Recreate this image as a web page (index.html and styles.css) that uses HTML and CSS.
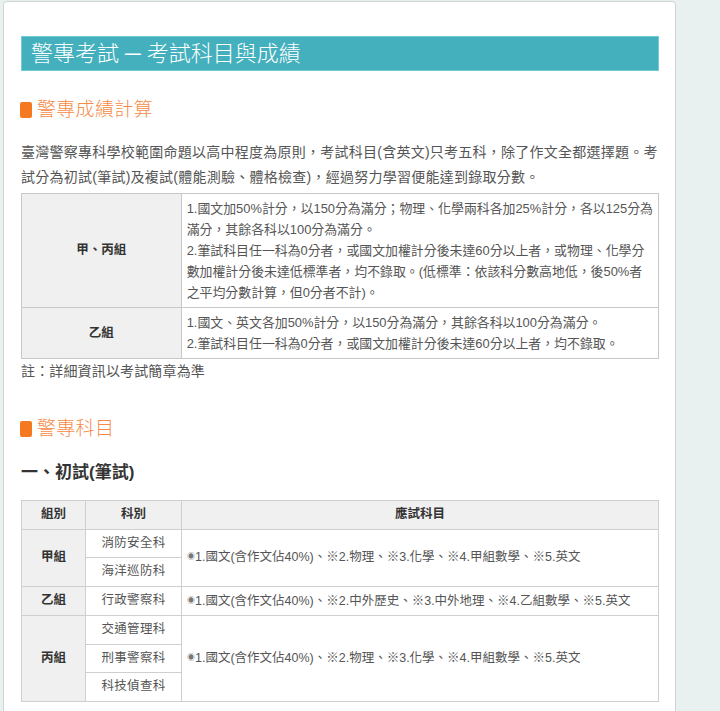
FILE: index.html
```html
<!DOCTYPE html>
<html lang="zh-Hant">
<head>
<meta charset="utf-8">
<title>警專考試 ─ 考試科目與成績</title>
<link rel="stylesheet" href="styles.css">
</head>
<body>
<div class="card">
  <h1 class="banner">警專考試 ─ 考試科目與成績</h1>

  <h2 class="sec"><span class="sq"></span>警專成績計算</h2>
  <p class="intro">臺灣警察專科學校範圍命題以高中程度為原則，考試科目(含英文)只考五科，除了作文全都選擇題。考試分為初試(筆試)及複試(體能測驗、體格檢查)，經過努力學習便能達到錄取分數。</p>

  <table class="score">
    <tr>
      <th class="grp">甲、丙組</th>
      <td>1.國文加50%計分，以150分為滿分；物理、化學兩科各加25%計分，各以125分為<br>滿分，其餘各科以100分為滿分。<br>2.筆試科目任一科為0分者，或國文加權計分後未達60分以上者，或物理、化學分<br>數加權計分後未達低標準者，均不錄取。(低標準：依該科分數高地低，後50%者<br>之平均分數計算，但0分者不計)。</td>
    </tr>
    <tr>
      <th class="grp">乙組</th>
      <td>1.國文、英文各加50%計分，以150分為滿分，其餘各科以100分為滿分。<br>2.筆試科目任一科為0分者，或國文加權計分後未達60分以上者，均不錄取。</td>
    </tr>
  </table>
  <p class="note">註：詳細資訊以考試簡章為準</p>

  <h2 class="sec sec2"><span class="sq"></span>警專科目</h2>
  <h3 class="sub">一、初試(筆試)</h3>

  <table class="subj">
    <tr>
      <th class="c1">組別</th>
      <th class="c2">科別</th>
      <th class="c3">應試科目</th>
    </tr>
    <tr>
      <th rowspan="2">甲組</th>
      <td class="dept">消防安全科</td>
      <td rowspan="2" class="items"><span class="dot">◉</span>1.國文(含作文佔40%)、※2.物理、※3.化學、※4.甲組數學、※5.英文</td>
    </tr>
    <tr>
      <td class="dept">海洋巡防科</td>
    </tr>
    <tr>
      <th>乙組</th>
      <td class="dept">行政警察科</td>
      <td class="items"><span class="dot">◉</span>1.國文(含作文佔40%)、※2.中外歷史、※3.中外地理、※4.乙組數學、※5.英文</td>
    </tr>
    <tr>
      <th rowspan="3">丙組</th>
      <td class="dept">交通管理科</td>
      <td rowspan="3" class="items"><span class="dot">◉</span>1.國文(含作文佔40%)、※2.物理、※3.化學、※4.甲組數學、※5.英文</td>
    </tr>
    <tr>
      <td class="dept">刑事警察科</td>
    </tr>
    <tr>
      <td class="dept">科技偵查科</td>
    </tr>
  </table>
</div>
</body>
</html>
```

FILE: styles.css
```css
html, body {
  margin: 0;
  padding: 0;
}
body {
  background: #e8f0f0;
  font-family: "Liberation Sans", "Noto Sans CJK TC", sans-serif;
  color: #555;
  height: 711px;
  overflow: hidden;
}
.card {
  margin: 1px 0 0 3px;
  width: 638px;
  min-height: 760px;
  background: #fff;
  border: 1px solid #cfd4d4;
  border-radius: 4px;
  padding: 34px 16px 0 17px;
}
.banner {
  margin: 0;
  height: 33px;
  background: #44b0bd;
  border: 1px solid #72cdd6;
  color: #fff;
  font-weight: 300;
  font-size: 22px;
  line-height: 33px;
  padding-left: 9px;
}
.sec {
  display: flex;
  align-items: center;
  margin: 26px 0 0;
  font-size: 19px;
  letter-spacing: 0.3px;
  font-weight: 300;
  line-height: 26px;
  color: #f68b48;
}
.sq {
  display: inline-block;
  width: 12px;
  height: 16px;
  border-radius: 2px;
  background: #f47920;
  margin: -1px 5px 0 -1px;
}
.intro {
  margin: 17px 0 0;
  font-size: 14px;
  letter-spacing: 0.25px;
  line-height: 25px;
}
table {
  border-collapse: collapse;
  width: 100%;
}
.score {
  margin-top: 3px;
  border: 1px solid #bdbdbd;
}
.score th, .score td {
  border: 1px solid #c8c8c8;
  line-height: 21px;
}
.score th {
  width: 158px;
  padding: 0 1px;
  background: #f0f0f0;
  color: #333;
  font-weight: bold;
  font-size: 12.5px;
}
.score td {
  padding: 4px 5px;
  font-size: 12.9px;
  white-space: nowrap;
  text-align: left;
  vertical-align: top;
}
.note {
  margin: 2px 0 0;
  font-size: 14px;
  letter-spacing: 0.15px;
  line-height: 20px;
}
.sec2 {
  margin-top: 35px;
}
.sub {
  margin: 19px 0 0;
  font-size: 17px;
  line-height: 24px;
  font-weight: bold;
  color: #333;
}
.subj {
  margin-top: 15px;
  border: 1px solid #c8c8c8;
}
.subj th, .subj td {
  border: 1px solid #cfcfcf;
  font-size: 12.5px;
  line-height: 19.5px;
  padding: 4px 5px;
  height: 19.5px;
  white-space: nowrap;
}
.subj th {
  background: #f0f0f0;
  color: #333;
  font-weight: bold;
}
.subj .c1 { width: 53px; }
.subj .c2 { width: 85px; }
.subj .dept {
  text-align: center;
  letter-spacing: 0.3px;
  background: #fff;
}
.subj .items {
  text-align: left;
  vertical-align: middle;
}
.dot {
  font-size: 8px;
  color: #777;
  vertical-align: 2px;
}
```
